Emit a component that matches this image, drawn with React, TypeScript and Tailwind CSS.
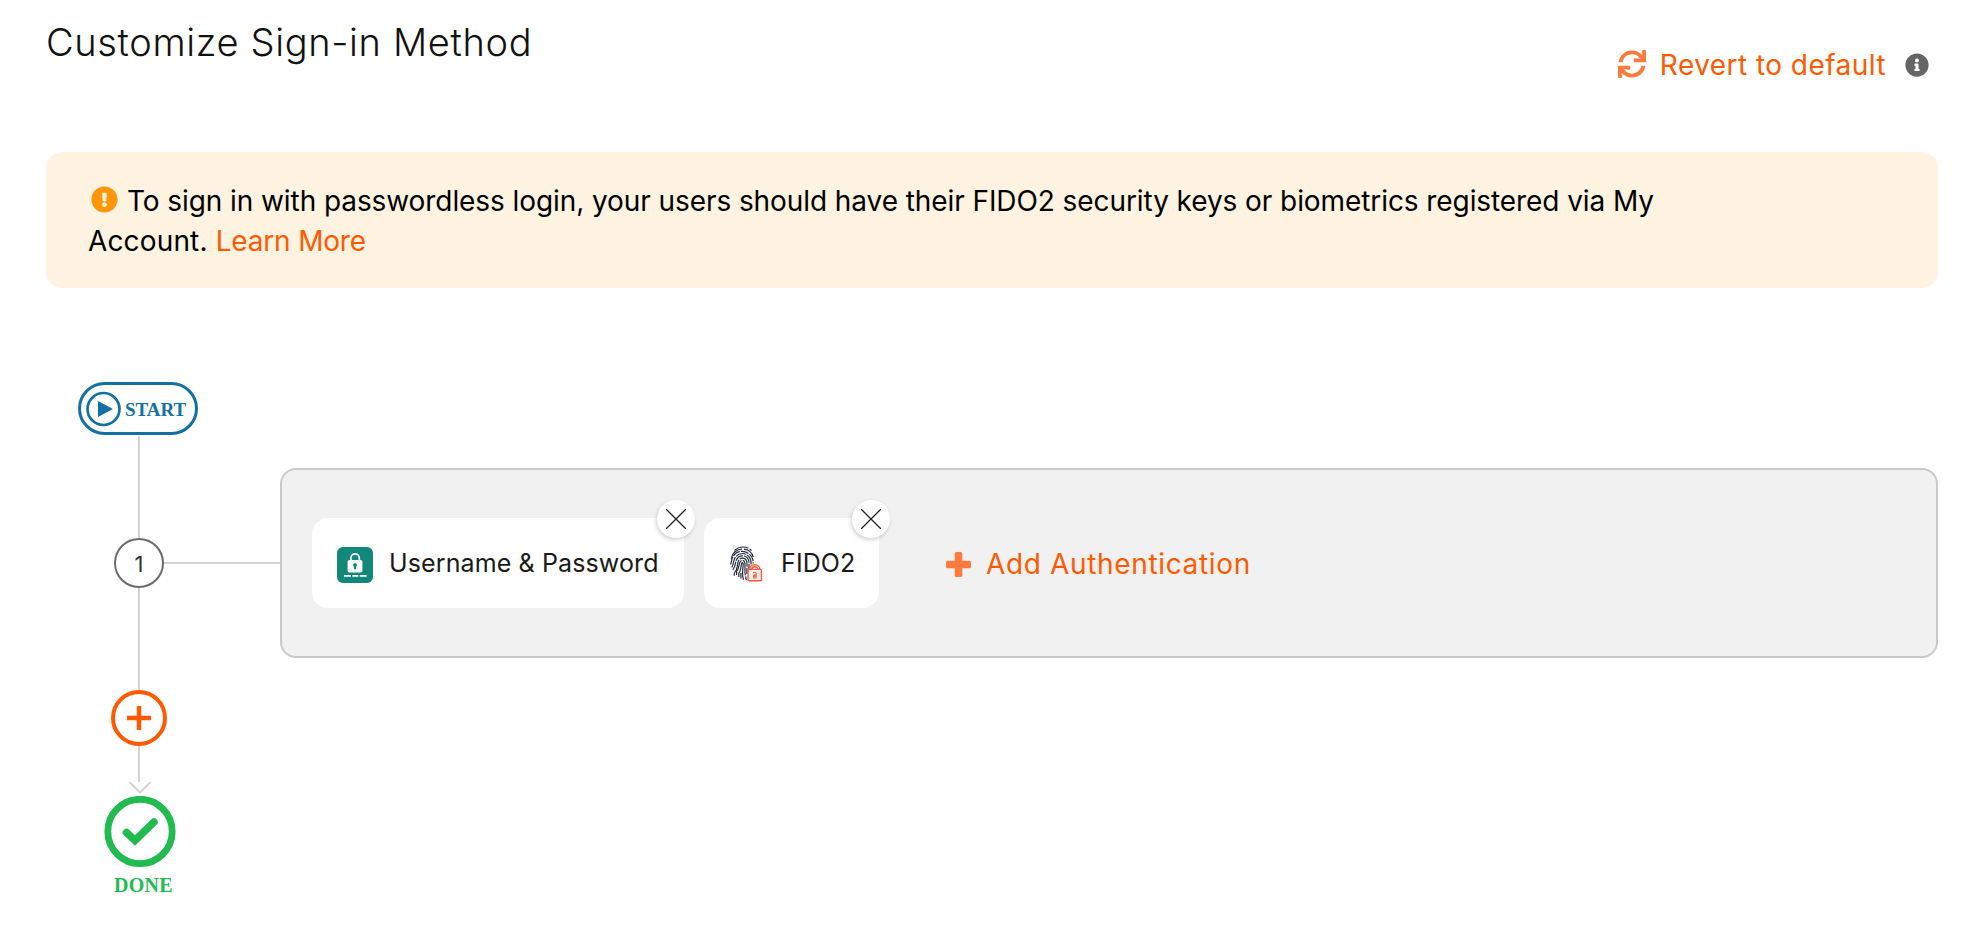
import type { ReactNode } from "react";
import { FaExclamationCircle, FaInfoCircle, FaSync } from "react-icons/fa";

function LockIcon() {
  return (
    <svg viewBox="0 0 36 36" className="size-9 shrink-0 translate-y-px">
      <rect width="36" height="36" rx="6" fill="#12887a" />
      <path d="M13.9 14V11a4.2 4.2 0 0 1 8.4 0v3" fill="none" stroke="#fff" strokeWidth="1.7" />
      <rect x="10.6" y="13" width="14.8" height="12.6" rx="1.8" fill="#fff" />
      <path d="M18 16a2 2 0 0 1 1 3.7V22.3h-2v-2.6A2 2 0 0 1 18 16z" fill="#12887a" />
      <path d="M7 28.9h7M15.3 28.9h6M22.7 28.9h7" stroke="#fff" strokeWidth="1.6" />
    </svg>
  );
}

function FingerprintIcon() {
  return (
    <svg viewBox="0 0 36 36" className="size-9 shrink-0" fill="none">
      <g stroke="#232c38" strokeWidth="1.2">
        <path d="M5.5 4.6C8 2 11 1 13.8 1s4.5.8 5.6 1.3M20.6 3l2 1.6" />
        <path d="M2.2 12.5C2.9 7 8 3.1 13 3.1M15 3.2c4 .4 8 3.3 9.2 7.8" />
        <path d="M1.5 18.5c1.2-2.5 1-4.5 1.8-6.5C5 7.5 9 5.3 13 5.3s9 2.5 10.6 7.7c.4 1.5.5 3 .5 4.5" strokeDasharray="8 1.1" />
        <path d="M2.7 21.5c2-3 1.6-5.6 2.6-8.3 1.5-3.7 4.5-5.7 8-5.7s7 2.3 8.2 6c.6 2 .6 4 .5 6.5" strokeDasharray="11 1" />
        <path d="M3.8 24c2.9-3.7 2.3-6.5 3.4-9.5 1.1-2.9 3.4-4.7 6.2-4.7s5.500 1.900 6.300 5c.5 2.300.3 5.200.1 8" strokeDasharray="9 1" />
        <path d="M5.5 27c4-5 2.300-8.500 3.700-11.500.8-2.100 2.300-3.400 4.300-3.400s3.700 1.400 4.300 3.700c.6 3.300-.2 8.200.2 12.200" strokeDasharray="14 1" />
        <path d="M5.3 29.800V27M7.600 29v-3.500c2.400-3.300 2.200-5.500 3-8.500.5-1.700 1.400-2.600 2.800-2.600s2.300 1 2.500 2.800c.4 3.800-.8 9.800 1.200 14.800" strokeDasharray="16 1" />
        <path d="M9.8 31v-3.500c2.300-3.500 2-7.500 3-10.500.8-1 1.500 0 1.400 1.500-.3 5-1.500 10 .3 15.300" />
        <path d="M11.9 32.500v-5.500M17.500 34l-1-2" />
      </g>
      <g stroke="#f8573e" strokeWidth="1.4">
        <rect x="19" y="23.4" width="13.5" height="11.4" rx="1" fill="#fff0ed" />
        <path d="M20.800 23.300a5 4.500 0 0 1 10 0M22.800 23.300a3 2.500 0 0 1 6 0" />
        <path d="M24.200 27.200a1.600 1.600 0 1 1 2.900 1.400v3.400h-2.400v-3.200M25.900 28v3" strokeWidth="1.1" />
      </g>
    </svg>
  );
}

function PlusIcon() {
  return (
    <svg viewBox="0 0 25 25" className="size-[25px] shrink-0" fill="#ff7b3d">
      <rect x="8.7" width="7.6" height="25" rx="1.6" />
      <rect y="8.7" width="25" height="7.6" rx="1.6" />
    </svg>
  );
}

function StartBadge() {
  return (
    <div className="ml-[78px] flex h-[53px] w-[120px] items-center rounded-full border-[3px] border-[#1271a2] pl-[5px]">
      <svg viewBox="0 0 36 36" className="size-9 shrink-0">
        <circle cx="17.5" cy="18" r="16" fill="none" stroke="#1271a2" strokeWidth="2.7" />
        <path d="M12 10v16l15-8z" fill="#1271a2" />
      </svg>
      <span className="pt-[3px] pl-[3px] font-['Liberation_Serif',serif] text-[19px] leading-6 font-bold text-[#1271a2]">
        START
      </span>
    </div>
  );
}

function AuthCard({ icon, label, className }: { icon: ReactNode; label: string; className: string }) {
  return (
    <div className={`relative flex h-[90px] items-center rounded-2xl bg-white pt-0.5 pl-[25px] ${className}`}>
      {icon}
      <span className="pb-px pl-4 text-[25px] tracking-[0.12px] whitespace-nowrap text-[#1a1a1a]">{label}</span>
      <button className="absolute -top-[18px] -right-[11px] flex size-[38px] items-center justify-center rounded-full bg-white shadow-[-1px_2px_4px_rgba(0,0,0,0.18)]">
        <svg viewBox="0 0 20 20" className="size-5" stroke="#222" strokeWidth="1.3">
          <path d="M0 0l20 20M20 0L0 20" />
        </svg>
      </button>
    </div>
  );
}

export default function App() {
  return (
    <main className="h-[932px] w-[1986px] bg-white font-['Inter',sans-serif] font-normal">
      <header className="flex h-[152px] justify-between pr-[57px] pl-[46px]">
        <h1 className="pt-[18px] text-[38px] leading-[48px] font-light tracking-[0.65px] text-[#111]">
          Customize Sign-in Method
        </h1>
        <div className="mt-[45px] flex h-10 items-center">
          <FaSync className="mb-0.5 size-7 text-[#ff7b3d]" />
          <a className="pl-3.5 text-[28px] leading-10 tracking-[0.45px] text-[#ff5a00]">Revert to default</a>
          <FaInfoCircle className="ml-[19px] size-6 text-[#666]" />
        </div>
      </header>

      <section className="mr-12 ml-[46px] h-[136px] rounded-2xl bg-[#fdf3e0] pt-[29px] pl-[42px] text-[28px] leading-10 text-black">
        <p className="tracking-[-0.08px]">
          <FaExclamationCircle className="mr-[9px] ml-[3px] inline size-[27px] -translate-y-1 text-[#ff960a]" />
          To sign in with passwordless login, your users should have their FIDO2 security keys or biometrics registered
          via My
        </p>
        <p>
          <span className="tracking-[0.15px]">Account. </span>
          <a className="tracking-[-0.18px] text-[#ff5a00]">Learn More</a>
        </p>
      </section>

      <section className="pt-[94px]">
        <StartBadge />
        <div className="mt-px ml-[138px] h-8 w-0.5 bg-[#d3d3d3]" />
        <div className="flex h-[190px] pl-[114px]">
          <div className="flex w-[50px] flex-col items-center">
            <div className="w-0.5 flex-1 bg-[#d3d3d3]" />
            <div className="flex size-[50px] items-center justify-center rounded-full border-2 border-[#6b6b6b] pt-0.5 text-[22px] text-[#333]">
              1
            </div>
            <div className="w-0.5 flex-1 bg-[#d3d3d3]" />
          </div>
          <div className="h-0.5 w-[116px] self-center bg-[#d3d3d3]" />
          <div className="flex w-[1658px] items-center rounded-2xl border-2 border-[#c9c9c9] bg-[#f1f1f1] pl-[30px]">
            <AuthCard icon={<LockIcon />} label="Username & Password" className="w-[372px]" />
            <AuthCard icon={<FingerprintIcon />} label="FIDO2" className="ml-5 w-[175px]" />
            <div className="flex items-center pt-0.5 pl-[67px]">
              <PlusIcon />
              <a className="pl-[15px] text-[28px] leading-10 tracking-[0.65px] text-[#ff5a00]">Add Authentication</a>
            </div>
          </div>
        </div>
        <div className="ml-[138px] h-8 w-0.5 bg-[#d3d3d3]" />
        <button className="ml-[111px] flex size-14 items-center justify-center rounded-full border-4 border-[#ff5a00]">
          <svg viewBox="0 0 24 24" className="size-6" stroke="#ff5a00" strokeWidth="4.5">
            <path d="M0 12h24M12 0v24" />
          </svg>
        </button>
        <div className="ml-[138px] h-9 w-0.5 bg-[#d3d3d3]" />
        <svg viewBox="0 0 24 14" className="ml-32 block h-3.5 w-6" fill="none" stroke="#d3d3d3" strokeWidth="2">
          <path d="M1.5 0L12 10.5L22.5 0" />
        </svg>
        <svg viewBox="0 0 72 72" className="ml-[104px] block size-[72px]" fill="none" stroke="#21bb4f">
          <circle cx="36" cy="35.5" r="32.2" strokeWidth="6.8" />
          <path d="M22.5 36.5L31 44.5L50 26" strokeWidth="7.5" strokeLinecap="round" />
        </svg>
        <div className="mt-[5px] ml-[114px] font-['Liberation_Serif',serif] text-[20px] leading-6 font-bold tracking-[0.3px] text-[#21bb4f]">
          DONE
        </div>
      </section>
    </main>
  );
}
